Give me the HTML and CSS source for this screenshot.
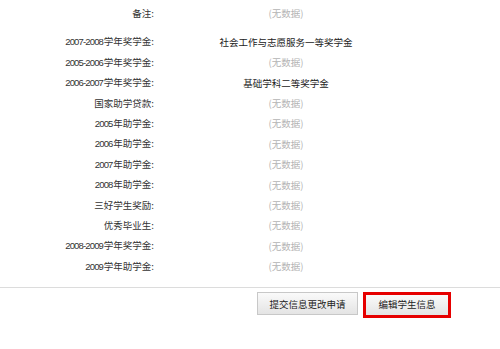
FILE: index.html
```html
<!DOCTYPE html>
<html lang="zh-CN">
<head>
<meta charset="utf-8">
<title>学生信息</title>
<link rel="stylesheet" href="styles.css">
</head>
<body>
<div class="page">
  <div class="info">
    <div class="row remark"><div class="label">备注:</div><div class="value empty">(无数据)</div></div>
    <div class="row"><div class="label"><span class="n">2007-2008</span>学年奖学金:</div><div class="value">社会工作与志愿服务一等奖学金</div></div>
    <div class="row"><div class="label"><span class="n">2005-2006</span>学年奖学金:</div><div class="value empty">(无数据)</div></div>
    <div class="row"><div class="label"><span class="n">2006-2007</span>学年奖学金:</div><div class="value">基础学科二等奖学金</div></div>
    <div class="row"><div class="label">国家助学贷款:</div><div class="value empty">(无数据)</div></div>
    <div class="row"><div class="label"><span class="n">2005</span>年助学金:</div><div class="value empty">(无数据)</div></div>
    <div class="row"><div class="label"><span class="n">2006</span>年助学金:</div><div class="value empty">(无数据)</div></div>
    <div class="row"><div class="label"><span class="n">2007</span>年助学金:</div><div class="value empty">(无数据)</div></div>
    <div class="row"><div class="label"><span class="n">2008</span>年助学金:</div><div class="value empty">(无数据)</div></div>
    <div class="row"><div class="label">三好学生奖励:</div><div class="value empty">(无数据)</div></div>
    <div class="row"><div class="label">优秀毕业生:</div><div class="value empty">(无数据)</div></div>
    <div class="row"><div class="label"><span class="n">2008-2009</span>学年奖学金:</div><div class="value empty">(无数据)</div></div>
    <div class="row"><div class="label"><span class="n">2009</span>学年助学金:</div><div class="value empty">(无数据)</div></div>
  </div>
  <div class="actions">
    <button class="btn">提交信息更改申请</button>
    <button class="btn btn-edit">编辑学生信息</button>
  </div>
</div>
</body>
</html>
```
FILE: styles.css
```css
html, body {
  margin: 0;
  padding: 0;
  background: #fff;
}
body {
  font-family: "Noto Sans CJK SC", "Liberation Sans", sans-serif;
  font-size: 9.5px;
  color: #333;
}
.page {
  width: 500px;
}
.info {
  padding-top: 3px;
  padding-bottom: 11px;
}
.row {
  display: grid;
  grid-template-columns: 154px 264px;
  height: 20.4px;
  align-items: center;
  line-height: 20.4px;
}
.row.remark {
  margin-bottom: 8px;
}
.label {
  text-align: right;
  white-space: nowrap;
}
.n {
  font-family: "Liberation Sans", sans-serif;
  font-size: 9.5px;
  letter-spacing: -0.85px;
  margin-right: 0.85px;
}
.value {
  text-align: center;
  white-space: nowrap;
  color: #222;
}
.value.empty {
  color: #b4b4b4;
}
.actions {
  border-top: 1px solid #dcdcdc;
  display: flex;
  justify-content: flex-end;
  align-items: flex-start;
  gap: 5px;
  padding: 4px 49px 0 0;
}
.btn {
  font-family: "Noto Sans CJK SC", sans-serif;
  font-size: 9.5px;
  color: #222;
  margin: 0;
  padding: 0;
  width: 101px;
  height: 23px;
  border: 1px solid #c8c8c8;
  background: linear-gradient(#fafafa, #e4e4e4);
  cursor: pointer;
}
.btn-edit {
  width: 88px;
  height: 26px;
  border: 3px solid #e60000;
  padding-bottom: 3px;
}
```
